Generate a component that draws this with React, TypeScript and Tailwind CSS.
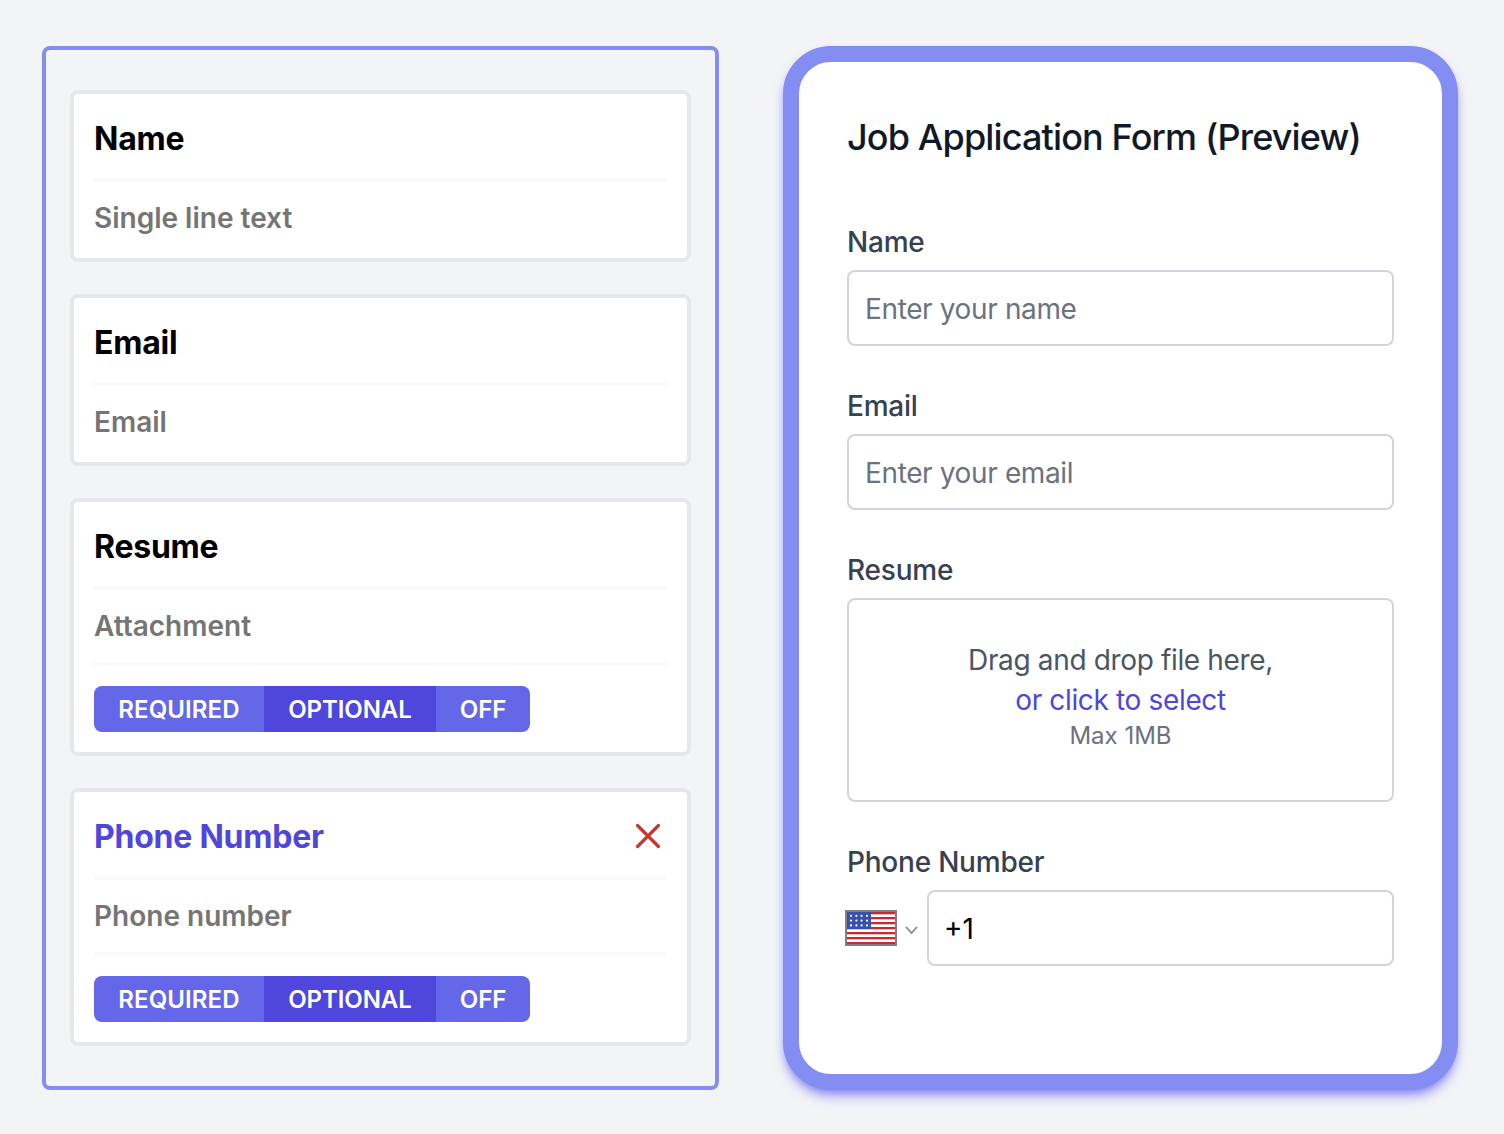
import React from "react";

function Toggle() {
  return (
    <div className="mt-5 flex h-[46px] w-[436px] overflow-hidden rounded-lg bg-[#6467e8] text-2xl font-semibold leading-[47px] text-white">
      <div className="w-[170px] text-center tracking-[0.1px]">REQUIRED</div>
      <div className="w-[172px] bg-[#4f46dc] text-center tracking-[-0.08px]">OPTIONAL</div>
      <div className="w-[94px] text-center tracking-[-0.05px]">OFF</div>
    </div>
  );
}

type CardProps = { title: string; kind: string; toggle?: boolean; active?: boolean };

function Card({ title, kind, toggle, active }: CardProps) {
  return (
    <div className={`rounded-lg border-4 border-[#e5e7eb] bg-white px-5 ${toggle ? "h-[258px]" : "h-[172px]"}`}>
      <div className="flex h-[88px] items-center justify-between border-b-4 border-[#fafafa]">
        <div className={`pt-[6px] text-[32px] font-bold tracking-[-0.24px] ${active ? "text-[#4f46dc]" : "text-black"}`}>{title}</div>
        {active && (
          <svg className="mr-[6px] mt-1 size-[26px]" viewBox="0 0 26 26" fill="none" stroke="#c8372d" strokeWidth="3.2" strokeLinecap="round">
            <path d="M2.500 2.500L23.500 23.500M23.500 2.500L2.500 23.500" />
          </svg>
        )}
      </div>
      <div className={`flex h-[76px] text-[28px] font-semibold leading-[72px] text-[#757575] ${toggle ? "border-b-4 border-[#fafafa]" : ""}`}>{kind}</div>
      {toggle && <Toggle />}
    </div>
  );
}

function Label({ children }: { children: React.ReactNode }) {
  return <div className="h-10 text-[28px] font-medium leading-10 tracking-[-0.22px] text-[#374151]">{children}</div>;
}

const stripes = [2, 7, 12, 17, 22, 27, 32];
const starRows = [5.800, 10.600, 15.400];
const starCols = [6, 11.400, 16.600, 22];

function Flag() {
  return (
    <svg className="-ml-[2px] h-9 w-[52px] shrink-0" viewBox="0 0 52 36">
      <rect width="52" height="36" fill="#808080" />
      <rect x="2" y="2" width="48" height="32" fill="#fff" />
      {stripes.map((y) => (
        <rect key={y} x="2" y={y} width="48" height={y === 32 ? 2 : 2.3} fill="#c8282f" />
      ))}
      <rect x="2" y="2" width="24" height="17" fill="#3a51ab" />
      {starRows.map((y) => starCols.map((x) => <circle key={`${x}-${y}`} cx={x} cy={y} r="1.100" fill="#fff" />))}
    </svg>
  );
}

const field = "mt-2 h-[76px] rounded-lg border-2 border-[#d1d5db] px-4 text-[28px] leading-[74px] tracking-[-0.37px] text-[#6b7280]";

export default function App() {
  return (
    <div className="flex h-[1134px] w-[1504px] items-start gap-16 bg-[#f3f4f6] pl-[42px] pt-[46px] font-['Inter',sans-serif]">
      <div className="flex h-[1044px] w-[677px] flex-col gap-8 rounded-lg border-4 border-[#848df2] px-6 pt-10">
        <Card title="Name" kind="Single line text" />
        <Card title="Email" kind="Email" />
        <Card title="Resume" kind="Attachment" toggle />
        <Card title="Phone Number" kind="Phone number" toggle active />
      </div>
      <div className="h-[1044px] w-[675px] rounded-[48px] border-[16px] border-[#848df2] bg-white px-12 pt-12 shadow-[0_8px_12px_-2px_#6366f199,0_4px_8px_-4px_#6366f199]">
        <h1 className="h-14 whitespace-nowrap text-[36px] font-medium leading-[54px] tracking-[-0.86px] text-[#111827]">Job Application Form (Preview)</h1>
        <div className="mt-14">
          <Label>Name</Label>
          <div className={field}>Enter your name</div>
        </div>
        <div className="mt-10">
          <Label>Email</Label>
          <div className={field}>Enter your email</div>
        </div>
        <div className="mt-10">
          <Label>Resume</Label>
          <div className="mt-2 h-[204px] rounded-lg border-2 border-[#d1d5db] pt-10 text-center text-[28px] leading-10 tracking-[-0.35px] text-[#4b5563]">
            <div>Drag and drop file here,</div>
            <div className="text-[#4f46dc]">or click to select</div>
            <div className="text-2xl leading-8 tracking-normal text-[#6b7280]">Max 1MB</div>
          </div>
        </div>
        <div className="mt-10">
          <Label>Phone Number</Label>
          <div className="mt-2 flex items-center">
            <Flag />
            <svg className="ml-2 mr-[9px] mt-1 h-[10px] w-[13px]" viewBox="0 0 13 10" fill="none" stroke="#888" strokeWidth="1.8"><path d="M1 2l5.500 6 5.500-6" /></svg>
            <div className="h-[76px] flex-1 rounded-lg border-2 border-[#d1d5db] px-[15px] text-[28px] leading-[75px] text-black">+1</div>
          </div>
        </div>
      </div>
    </div>
  );
}
